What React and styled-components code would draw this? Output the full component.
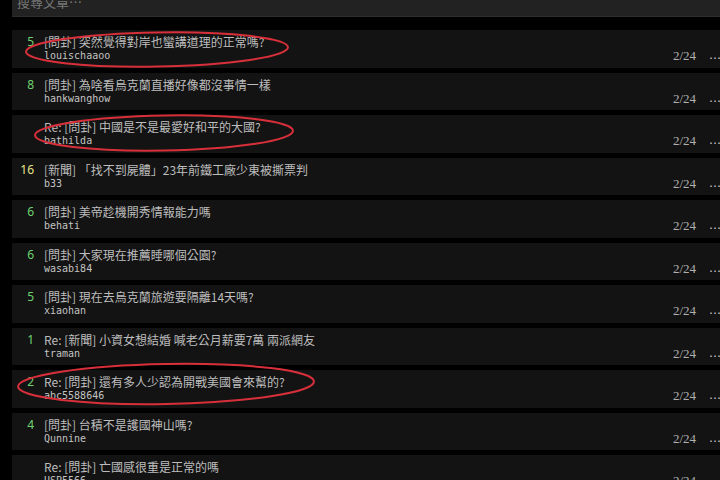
import React from 'react';
import styled, { createGlobalStyle } from 'styled-components';

const GlobalStyle = createGlobalStyle`
  html, body {
    margin: 0;
    padding: 0;
    background: #000;
    overflow: hidden;
  }
  body {
    font-family: "Noto Sans CJK TC", "Noto Sans", sans-serif;
  }
`;

const Page = styled.div`
  position: relative;
  width: 720px;
  height: 480px;
  overflow: hidden;
  padding-left: 12px;
  box-sizing: border-box;
`;

const SearchBar = styled.div`
  width: 740px;
  height: 30px;
  margin-top: -13px;
  background: #222;
  border-bottom: 1px solid #2e2e2e;
  box-sizing: border-box;
  display: flex;
  align-items: center;
  padding-left: 5px;
  color: #777;
  font-size: 13px;
`;

const List = styled.div`
  margin-top: 13px;
  display: flex;
  flex-direction: column;
  gap: 5px;
`;

const Row = styled.div`
  width: 740px;
  height: 37.5px;
  background: #131313;
  display: flex;
  align-items: flex-start;
  box-sizing: border-box;
  padding-top: 4px;
`;

const Count = styled.div`
  width: 22px;
  text-align: right;
  font-family: "Noto Sans", sans-serif;
  font-size: 12px;
  line-height: 16px;
  color: ${(p) => (p.$hot ? '#e6e68a' : '#6fd36f')};
`;

const Body = styled.div`
  flex: 1;
  margin-left: 10px;
  display: flex;
  flex-direction: column;
`;

const Title = styled.div`
  font-size: 12px;
  line-height: 16px;
  color: #bdbdbd;
  white-space: nowrap;
`;

const Author = styled.div`
  font-family: "DejaVu Sans Mono", monospace;
  font-size: 10px;
  line-height: 12px;
  color: #c4c4c4;
`;

const Date = styled.div`
  align-self: center;
  margin-top: 11px;
  font-family: "Liberation Serif", serif;
  font-size: 13px;
  color: #b0b0b0;
`;

const More = styled.div`
  align-self: center;
  margin-top: 9px;
  margin-left: 13px;
  width: 43px;
  font-family: "DejaVu Sans", sans-serif;
  font-size: 12px;
  color: #ccc;
`;

const Marks = styled.svg`
  position: absolute;
  left: 0;
  top: 0;
  pointer-events: none;
`;

const posts = [
  { n: '5', title: '[問卦] 突然覺得對岸也蠻講道理的正常嗎?', author: 'louischaaoo' },
  { n: '8', title: '[問卦] 為啥看烏克蘭直播好像都沒事情一樣', author: 'hankwanghow' },
  { n: '', title: 'Re: [問卦] 中國是不是最愛好和平的大國?', author: 'bathilda' },
  { n: '16', title: '[新聞] 「找不到屍體」23年前鐵工廠少東被撕票判', author: 'b33' },
  { n: '6', title: '[問卦] 美帝趁機開秀情報能力嗎', author: 'behati' },
  { n: '6', title: '[問卦] 大家現在推薦睡哪個公園?', author: 'wasabi84' },
  { n: '5', title: '[問卦] 現在去烏克蘭旅遊要隔離14天嗎?', author: 'xiaohan' },
  { n: '1', title: 'Re: [新聞] 小資女想結婚 喊老公月薪要7萬 兩派網友', author: 'traman' },
  { n: '2', title: 'Re: [問卦] 還有多人少認為開戰美國會來幫的?', author: 'abc5588646' },
  { n: '4', title: '[問卦] 台積不是護國神山嗎?', author: 'Qunnine' },
  { n: '', title: 'Re: [問卦] 亡國感很重是正常的嗎', author: 'USP5566' },
];

export default function App() {
  return (
    <Page>
      <GlobalStyle />
      <SearchBar>搜尋文章⋯</SearchBar>
      <List>
        {posts.map((p, i) => (
          <Row key={i}>
            <Count $hot={Number(p.n) >= 10}>{p.n}</Count>
            <Body>
              <Title>{p.title}</Title>
              <Author>{p.author}</Author>
            </Body>
            <Date>2/24</Date>
            <More>…</More>
          </Row>
        ))}
      </List>
      <Marks width="720" height="480" viewBox="0 0 720 480">
        <g fill="none" stroke="#d8303a" strokeWidth="2">
          <ellipse cx="157" cy="49.5" rx="131" ry="17" transform="rotate(-1 157 49.5)" />
          <ellipse cx="164" cy="133" rx="129" ry="17.5" transform="rotate(-1 164 133)" />
          <ellipse cx="166" cy="384" rx="148" ry="20" transform="rotate(-1 166 384)" />
        </g>
      </Marks>
    </Page>
  );
}
